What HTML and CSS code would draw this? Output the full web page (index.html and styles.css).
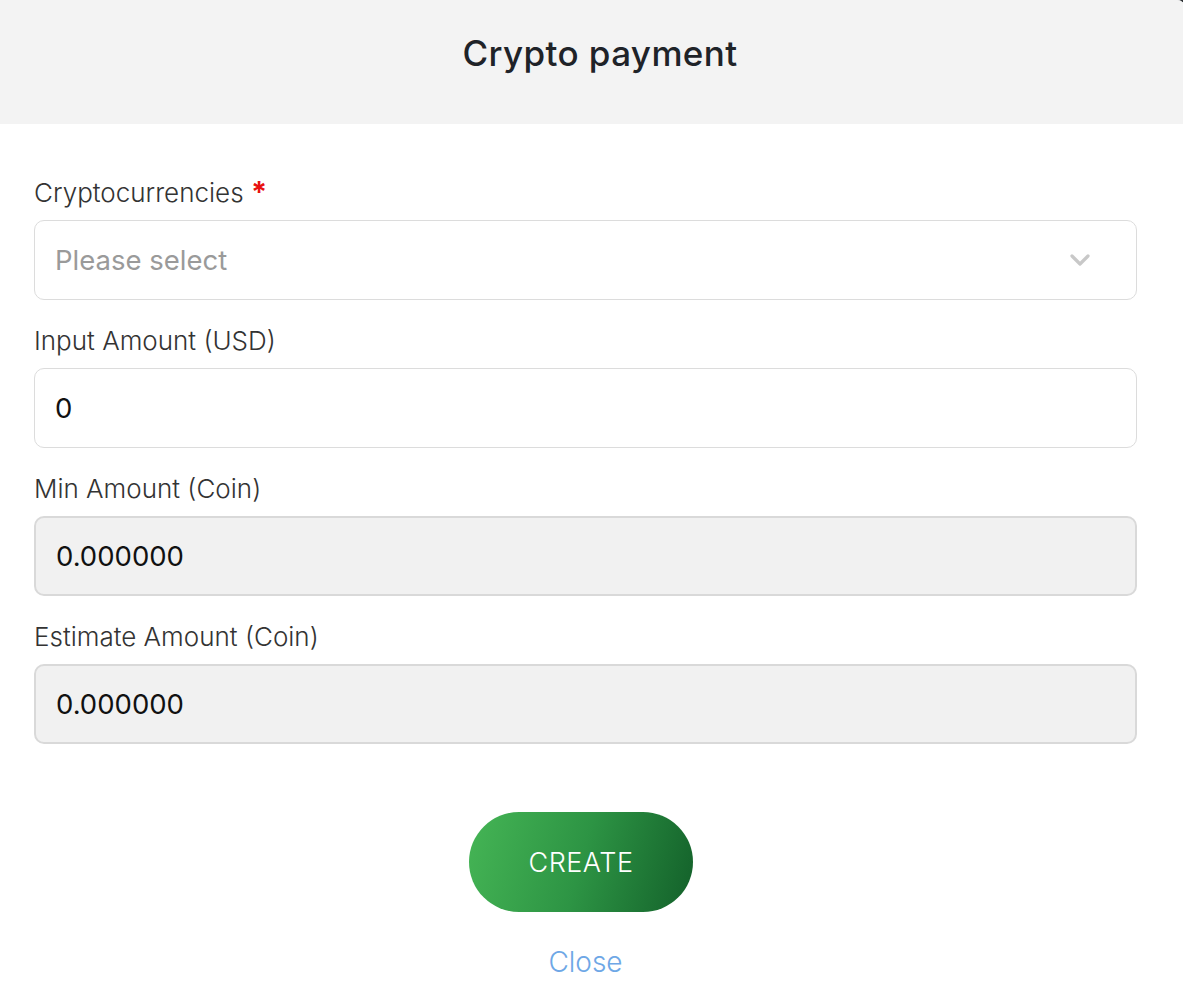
FILE: index.html
```html
<!DOCTYPE html>
<html lang="en">
<head>
  <meta charset="UTF-8">
  <title>Crypto payment</title>
  <link rel="stylesheet" href="styles.css">
</head>
<body>

<div class="modal">
  <div class="modal-header">
    <h2>Crypto payment</h2>
  </div>

  <form class="modal-body" onsubmit="return false">
    <div class="field">
      <label for="coin">Cryptocurrencies <span class="required">*</span></label>
      <div class="select" id="coin" tabindex="0">
        <span class="placeholder">Please select</span>
        <svg class="chevron" width="20" height="12" viewBox="0 0 20 12">
          <path d="M2 2 L10 10 L18 2" fill="none" stroke="#c8c8c8" stroke-width="3.2" stroke-linecap="round" stroke-linejoin="round"/>
        </svg>
      </div>
    </div>

    <div class="field">
      <label for="usd">Input Amount (USD)</label>
      <input id="usd" type="text" value="0">
    </div>

    <div class="field">
      <label for="minAmount">Min Amount (Coin)</label>
      <input id="minAmount" type="text" value="0.000000" disabled>
    </div>

    <div class="field">
      <label for="estimate">Estimate Amount (Coin)</label>
      <input id="estimate" type="text" value="0.000000" disabled>
    </div>

    <div class="actions">
      <button class="btn-create" type="submit">CREATE</button>
      <a class="close-link" href="#">Close</a>
    </div>
  </form>
</div>

</body>
</html>
```

FILE: styles.css
```css
html, body {
  margin: 0;
  height: 100%;
  overflow: hidden;
}
body {
  font-family: Inter, "Noto Sans", Arial, sans-serif;
  background-color: #2e3236;
}
.modal {
  width: 1185px;
  min-height: 1003px;
  background: white;
  border-radius: 0 8px 0 0;
  overflow: hidden;
}
.modal-header {
  background: #f3f3f3;
  height: 124px;
  box-sizing: border-box;
  padding: 33px 0 0 15px;
  text-align: center;
}
.modal-header h2 {
  margin: 0;
  font-size: 35px;
  line-height: 40px;
  font-weight: 500;
  color: #1f2328;
  letter-spacing: 0.4px;
}
.modal-body {
  padding: 53px 48px 0 34px;
}
.field {
  margin-bottom: 25px;
}
.field label {
  display: block;
  font-size: 26px;
  line-height: 32px;
  font-weight: 300;
  color: #333;
  margin-bottom: 11px;
}
.required {
  color: #e8100f;
  font-size: 29px;
  line-height: 0;
  font-weight: 700;
}
.select, .field input {
  box-sizing: border-box;
  width: 100%;
  height: 80px;
  border: 1px solid #dcdcdc;
  border-radius: 10px;
  padding: 0 20px;
  font-family: inherit;
  font-size: 27.5px;
  color: #111;
  background: white;
  outline: none;
}
.select {
  display: flex;
  align-items: center;
  justify-content: space-between;
  padding-right: 46px;
}
.placeholder {
  color: #9a9a9a;
}
.field input:disabled {
  background: #f1f1f1;
  border: 2px solid #d9d9d9;
  color: #111;
  -webkit-text-fill-color: #111;
}
.actions {
  display: flex;
  flex-direction: column;
  align-items: center;
  padding-top: 43px;
}
.btn-create {
  width: 224px;
  height: 100px;
  border: none;
  border-radius: 50px;
  background: linear-gradient(105deg, #45b555 0%, #2d9444 50%, #13602a 100%);
  color: white;
  font-family: inherit;
  font-size: 27px;
  font-weight: 300;
  letter-spacing: 0.5px;
  margin-right: 9px;
  cursor: pointer;
}
.close-link {
  margin-top: 34px;
  font-size: 28px;
  line-height: 32px;
  font-weight: 300;
  color: #6ea7e6;
  text-decoration: none;
}
```
